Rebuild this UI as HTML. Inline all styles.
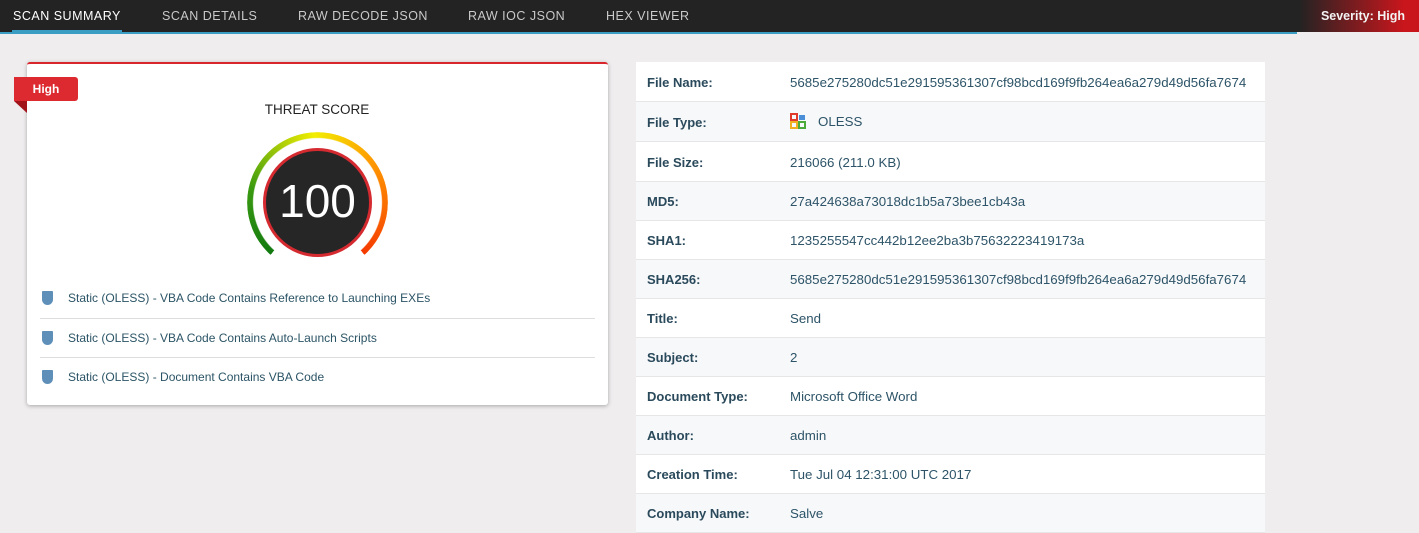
<!DOCTYPE html>
<html><head><meta charset="utf-8"><style>
*{margin:0;padding:0;box-sizing:border-box}
body{width:1419px;height:532px;overflow:hidden;background:#efedee;font-family:"Liberation Sans",sans-serif;color:#2b4b5c;position:relative}
.nav{position:absolute;left:0;top:0;width:1419px;height:32px;background:#232323}
.nav span{position:absolute;top:9px;font-size:12.5px;color:#c9c9c9;letter-spacing:.5px}
.blue{position:absolute;left:0;top:32px;width:1297px;height:2px;background:#3a9ec4}
.act{position:absolute;left:12px;top:30px;width:110px;height:3px;background:#3a9ec4}
.sev{position:absolute;right:0;top:0;width:150px;height:32px;background:linear-gradient(90deg,#232323 20%,#c8161c 90%)}
.sev b{position:absolute;right:14px;top:9px;font-size:12.5px;color:#f3f3f3}
.card{position:absolute;left:27px;top:62px;width:581px;height:343px;background:#fff;border-top:2px solid #d9262c;border-radius:3px;box-shadow:0 1px 4px rgba(0,0,0,.3)}
.tag{position:absolute;left:14px;top:77px;width:64px;height:24px;background:#dc2a30;border-radius:0 3px 3px 0;color:#fff;font-size:12px;font-weight:bold;text-align:center;line-height:24px}
.fold{position:absolute;left:14px;top:101px;width:0;height:0;border-top:12px solid #a0141a;border-left:13px solid transparent}
.ts{position:absolute;left:217px;top:102px;width:200px;text-align:center;font-size:13.5px;color:#222}
.ring{position:absolute;left:247px;top:132px;width:141px;height:141px;border-radius:50%;background:conic-gradient(from 222deg,#117a10 0deg,#3a9a10 60deg,#f2ee00 135deg,#ff9a00 190deg,#f53a00 276deg,transparent 276deg);-webkit-mask:radial-gradient(circle,transparent 64px,#000 65px,#000 70px,transparent 71px);mask:radial-gradient(circle,transparent 64px,#000 65px,#000 70px,transparent 71px)}
.core{position:absolute;left:263px;top:148px;width:109px;height:109px;border-radius:50%;background:#262626;border:3px solid #d42a30;color:#fff;font-size:46px;text-align:center;line-height:101px}
.it{position:absolute;left:40px;width:555px;font-size:12px;color:#2b5466}
.it i{position:absolute;left:2px;top:1px;width:11px;height:14px;background:#5e8fb8;border-radius:1px 1px 6px 6px}
.it span{position:absolute;left:28px;top:1px}
.tbl{position:absolute;left:636px;top:62px;width:629px}
.r{height:39px;border-bottom:1px solid #e6e6e6;position:relative;font-size:13px}
.r.t{height:40px}
.r:nth-child(odd){background:#fff}.r:nth-child(even){background:#f7f8fa}
.r b{position:absolute;left:11px;top:12px;color:#2a4a5c}
.r span{position:absolute;left:154px;top:12px;color:#2d5468;font-size:13.3px}
.r.t b,.r.t span{top:13px}
</style></head><body>
<div class="nav">
<span style="left:13px;color:#fff">SCAN SUMMARY</span>
<span style="left:162px">SCAN DETAILS</span>
<span style="left:298px">RAW DECODE JSON</span>
<span style="left:468px">RAW IOC JSON</span>
<span style="left:606px">HEX VIEWER</span>
<div class="sev"><b>Severity: High</b></div>
</div>
<div class="blue"></div><div class="act"></div>
<div class="card"></div>
<div class="tag">High</div><div class="fold"></div>
<div class="ts">THREAT SCORE</div>
<div class="ring"></div>
<div class="core">100</div>
<div class="it" style="top:290px;height:29px;border-bottom:1px solid #ddd"><i></i><span>Static (OLESS) - VBA Code Contains Reference to Launching EXEs</span></div>
<div class="it" style="top:330px;height:28px;border-bottom:1px solid #ddd"><i></i><span>Static (OLESS) - VBA Code Contains Auto-Launch Scripts</span></div>
<div class="it" style="top:369px;height:20px"><i></i><span>Static (OLESS) - Document Contains VBA Code</span></div>
<div class="tbl">
<div class="r t"><b>File Name:</b><span>5685e275280dc51e291595361307cf98bcd169f9fb264ea6a279d49d56fa7674</span></div>
<div class="r t"><b>File Type:</b><span style="top:11px"><svg width="16" height="16" style="vertical-align:-3px;margin-right:12px"><rect x="1" y="1" width="6" height="6" fill="none" stroke="#e03a2a" stroke-width="2"/><rect x="9" y="2" width="6" height="5" fill="#4a8fd8"/><rect x="1" y="9" width="6" height="6" fill="none" stroke="#f0b020" stroke-width="2"/><rect x="9" y="9" width="6" height="6" fill="none" stroke="#4caa3a" stroke-width="2"/></svg>OLESS</span></div>
<div class="r t"><b>File Size:</b><span>216066 (211.0 KB)</span></div>
<div class="r"><b>MD5:</b><span>27a424638a73018dc1b5a73bee1cb43a</span></div>
<div class="r"><b>SHA1:</b><span>1235255547cc442b12ee2ba3b75632223419173a</span></div>
<div class="r"><b>SHA256:</b><span>5685e275280dc51e291595361307cf98bcd169f9fb264ea6a279d49d56fa7674</span></div>
<div class="r"><b>Title:</b><span>Send</span></div>
<div class="r"><b>Subject:</b><span>2</span></div>
<div class="r"><b>Document Type:</b><span>Microsoft Office Word</span></div>
<div class="r"><b>Author:</b><span>admin</span></div>
<div class="r"><b>Creation Time:</b><span>Tue Jul 04 12:31:00 UTC 2017</span></div>
<div class="r"><b>Company Name:</b><span>Salve</span></div>
</div>
</body></html>
